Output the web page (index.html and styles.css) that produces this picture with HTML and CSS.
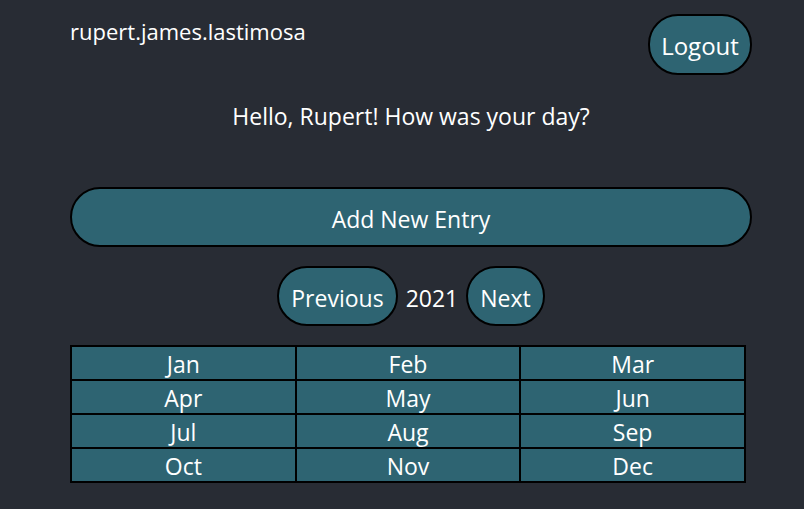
FILE: index.html
```html
<!DOCTYPE html>
<html>
<head>
<meta charset="utf-8">
<link rel="stylesheet" href="styles.css">
</head>
<body>
<div class="app">
  <header class="top">
    <div class="user">rupert.james.lastimosa</div>
    <button class="btn logout">Logout</button>
  </header>
  <p class="greeting">Hello, Rupert! How was your day?</p>
  <button class="btn add">Add New Entry</button>
  <div class="yearnav">
    <button class="btn">Previous</button>
    <span class="year">2021</span>
    <button class="btn">Next</button>
  </div>
  <table class="months">
    <tr><td>Jan</td><td>Feb</td><td>Mar</td></tr>
    <tr><td>Apr</td><td>May</td><td>Jun</td></tr>
    <tr><td>Jul</td><td>Aug</td><td>Sep</td></tr>
    <tr><td>Oct</td><td>Nov</td><td>Dec</td></tr>
  </table>
</div>
</body>
</html>
```
FILE: styles.css
```css
html, body {
  margin: 0;
  background: #282c34;
  color: #ffffff;
  font-family: "Open Sans", "Noto Sans", sans-serif;
}
.app {
  width: 682px;
  margin: 0 0 0 70px;
  padding-top: 14px;
}
.top {
  display: flex;
  justify-content: space-between;
  align-items: flex-start;
}
.user {
  font-size: 22px;
  margin-top: 2px;
}
.btn {
  background: #2e6472;
  color: #ffffff;
  border: 2px solid #000;
  border-radius: 30px;
  font-family: inherit;
  font-size: 23px;
  padding: 3px 12px 0;
  height: 61px;
}
.logout {
  width: 104px;
  font-size: 24px;
  padding: 2px 0 0;
}
.greeting {
  margin: 26px 0 0;
  text-align: center;
  font-size: 23px;
  height: 30px;
  line-height: 30px;
}
.add {
  display: block;
  width: 682px;
  margin-top: 56px;
  height: 60px;
}
.yearnav {
  display: flex;
  justify-content: center;
  align-items: center;
  gap: 8px;
  margin-top: 19px;
}
.yearnav .btn {
  height: 60px;
}
.year {
  font-size: 23px;
  padding-top: 3px;
}
.months {
  margin-top: 19px;
  width: 676px;
  border-collapse: collapse;
  background: #2e6472;
  table-layout: fixed;
}
.months td {
  border: 2px solid #000;
  text-align: center;
  font-size: 23px;
  padding: 2px 0 0;
  height: 30px;
  line-height: 30px;
}
```
